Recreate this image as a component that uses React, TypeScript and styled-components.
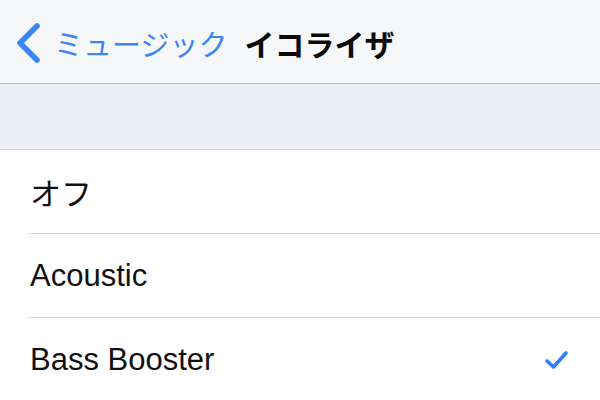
import React from "react";
import styled, { createGlobalStyle } from "styled-components";

const Global = createGlobalStyle`
  html, body { margin: 0; padding: 0; background: #ffffff; }
  body { font-family: "Liberation Sans", "Noto Sans CJK JP", sans-serif; }
`;

const Page = styled.div`
  width: 600px;
  height: 400px;
  overflow: hidden;
  display: flex;
  flex-direction: column;
  background: #ffffff;
`;

const NavBar = styled.div`
  height: 84px;
  flex: none;
  box-sizing: border-box;
  border-bottom: 1px solid #b8c1cb;
  background: #f6f7f9;
  display: flex;
  align-items: center;
  padding-left: 15px;
  padding-top: 3px;
  font-family: "Noto Sans CJK JP", sans-serif;
`;

const Back = styled.div`
  display: flex;
  align-items: center;
  color: #3a86f2;
  font-size: 29px;
  gap: 11px;
`;

const BackLabel = styled.span`
  line-height: 1;
`;

const Title = styled.span`
  margin-left: 17px;
  font-size: 30px;
  font-weight: 700;
  color: #0a0a0a;
  line-height: 1;
`;

const Spacer = styled.div`
  height: 66px;
  flex: none;
  box-sizing: border-box;
  background: #eceff6;
  border-bottom: 1px solid #d0d6de;
`;

const List = styled.div`
  display: flex;
  flex-direction: column;
  padding-left: 28px;
`;

const Row = styled.div<{ $last?: boolean }>`
  height: 84px;
  box-sizing: border-box;
  display: flex;
  align-items: center;
  justify-content: space-between;
  padding-left: 2px;
  padding-right: 30px;
  border-bottom: ${(p) => (p.$last ? "none" : "1px solid #d5dbe3")};
`;

const Label = styled.span`
  font-size: 31px;
  color: #111111;
`;

const Check = () => (
  <svg width="26" height="22" viewBox="0 0 26 22">
    <path d="M3 12 L9.5 18 L22 4" fill="none" stroke="#2f7ef5" strokeWidth="3.6" strokeLinecap="round" strokeLinejoin="round" />
  </svg>
);

const Chevron = () => (
  <svg width="28" height="40" viewBox="0 0 28 40">
    <path d="M22 3 L5 20 L22 37" fill="none" stroke="#3a86f2" strokeWidth="5.6" strokeLinecap="round" strokeLinejoin="round" />
  </svg>
);

export default function App() {
  return (
    <>
      <Global />
      <Page>
        <NavBar>
          <Back>
            <Chevron />
            <BackLabel>ミュージック</BackLabel>
          </Back>
          <Title>イコライザ</Title>
        </NavBar>
        <Spacer />
        <List>
          <Row>
            <Label>オフ</Label>
          </Row>
          <Row>
            <Label>Acoustic</Label>
          </Row>
          <Row $last>
            <Label>Bass Booster</Label>
            <Check />
          </Row>
        </List>
      </Page>
    </>
  );
}
